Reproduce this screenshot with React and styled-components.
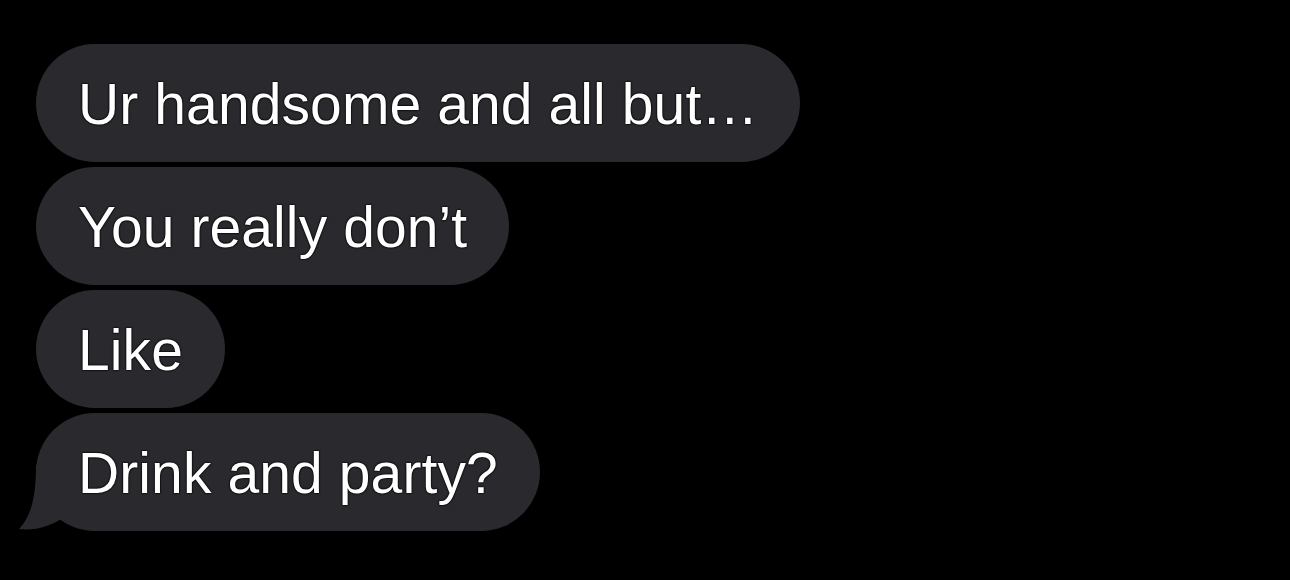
import styled, { createGlobalStyle } from 'styled-components';

const GlobalStyle = createGlobalStyle`
  html, body {
    margin: 0;
    padding: 0;
    background: #000;
  }
  body {
    font-family: "Helvetica Neue", "Liberation Sans", Arial, sans-serif;
  }
`;

const Screen = styled.div`
  width: 1290px;
  height: 580px;
  background: #000;
  box-sizing: border-box;
  padding: 44px 0 0 36px;
  display: flex;
  flex-direction: column;
  align-items: flex-start;
  gap: 5px;
  overflow: hidden;
`;

const Bubble = styled.div`
  position: relative;
  height: 118px;
  box-sizing: border-box;
  padding: 0 42px;
  border-radius: 59px;
  background: #2a2a2e;
  color: #fff;
  font-size: 57px;
  line-height: 120px;
  letter-spacing: 0.1px;
  white-space: nowrap;
  text-shadow: 0 0 2px #000, 0 0 2px #000, 0 0 1px #000;
`;

const Tail = styled.svg`
  position: absolute;
  left: -18px;
  bottom: 0;
  width: 70px;
  height: 66px;
`;

const messages = [
  'Ur handsome and all but…',
  'You really don’t',
  'Like',
  'Drink and party?',
];

export default function App() {
  return (
    <>
      <GlobalStyle />
      <Screen>
        {messages.map((text, i) => (
          <Bubble key={i}>
            {text}
            {i === messages.length - 1 && (
              <Tail viewBox="0 0 70 66">
                <path
                  d="M18 0 C18 30 14 50 1 64 C16 66 32 62 46 52 L60 0 Z"
                  fill="#2a2a2e"
                />
              </Tail>
            )}
          </Bubble>
        ))}
      </Screen>
    </>
  );
}
